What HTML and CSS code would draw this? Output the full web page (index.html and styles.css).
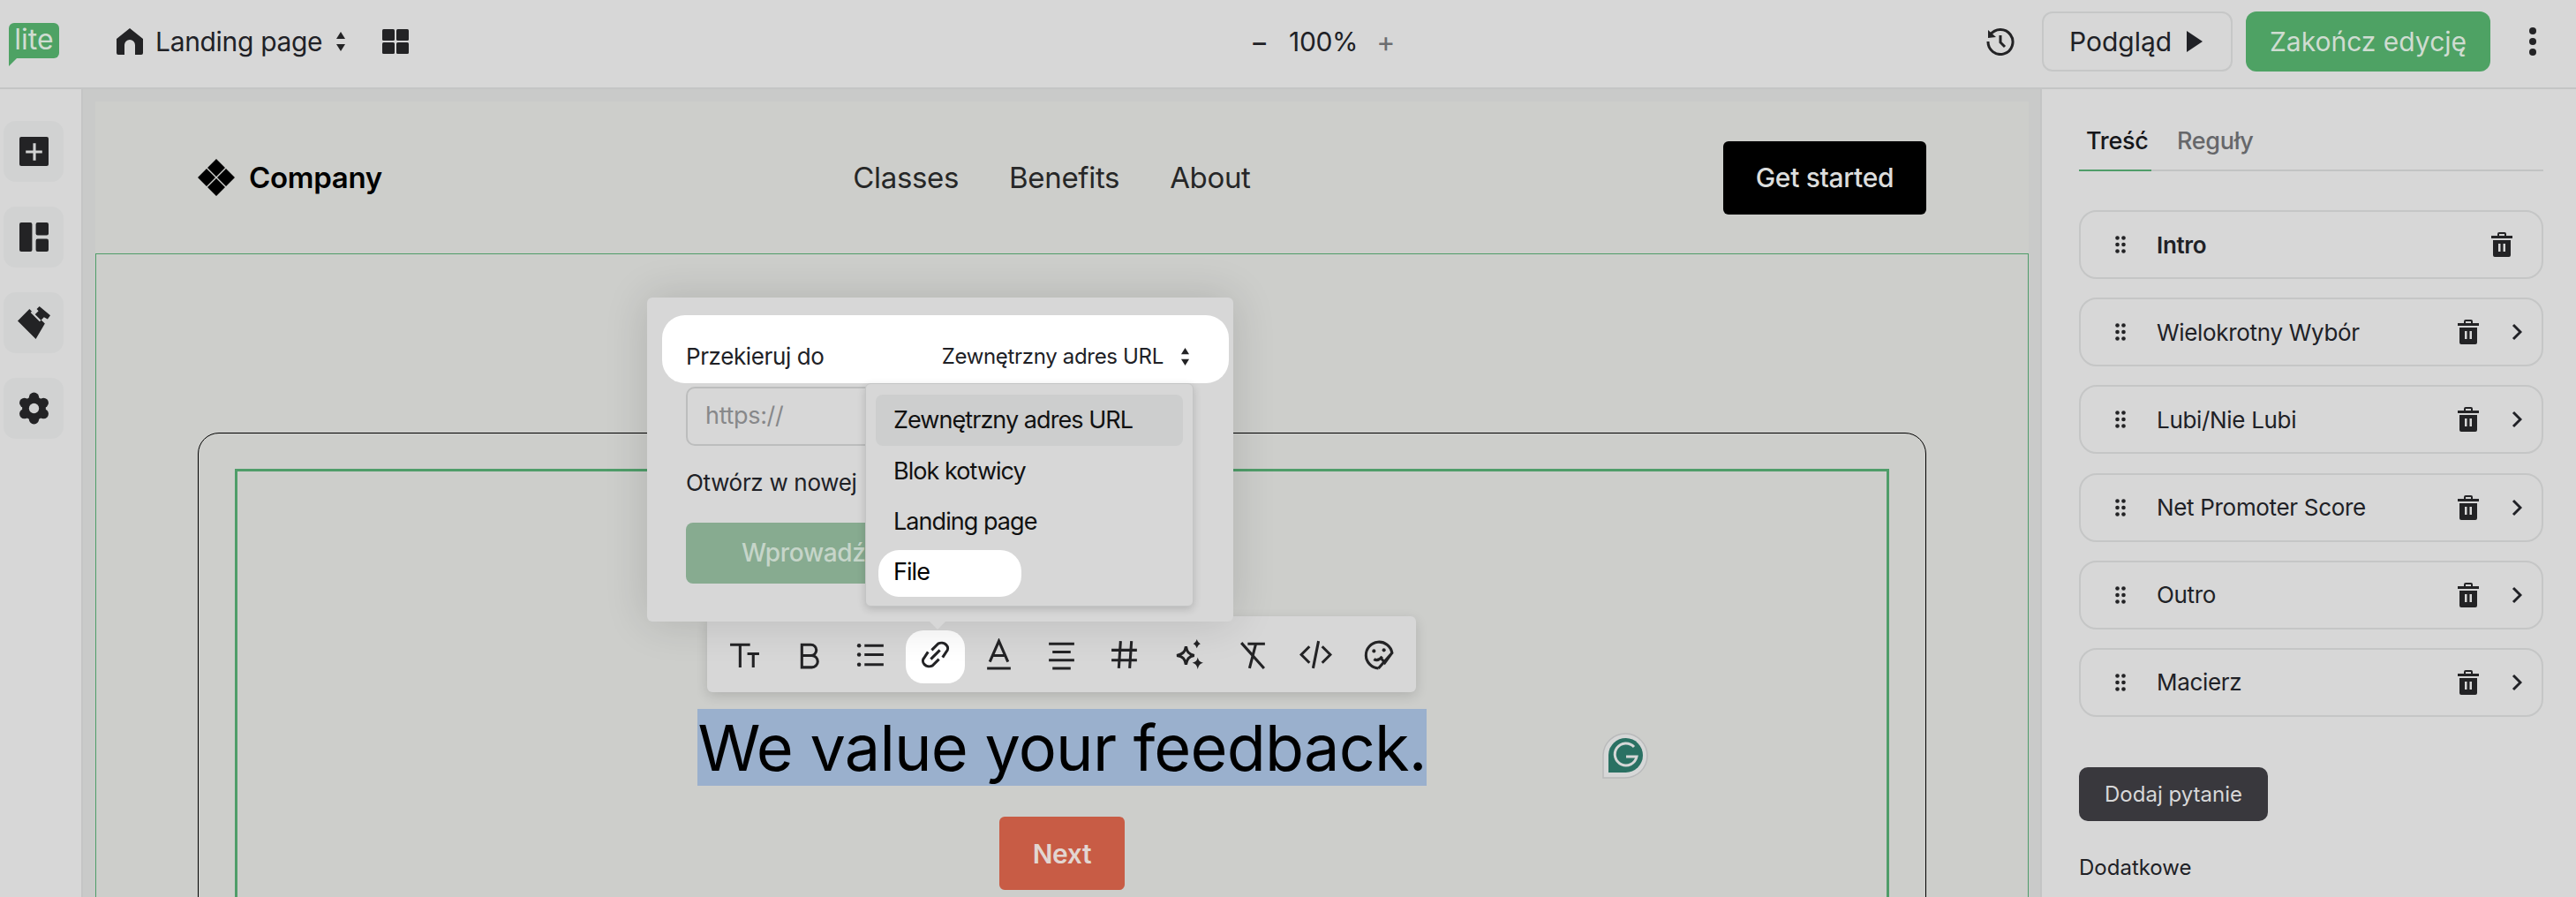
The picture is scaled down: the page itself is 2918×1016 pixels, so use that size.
FILE: index.html
```html
<!DOCTYPE html>
<html lang="pl">
  <head>
    <meta charset="UTF-8" />
    <title>Landing page</title>
    <link rel="stylesheet" href="styles.css">
  </head>
  <body>
    <header class="topbar">
      <div class="topbar-left">
        <div class="logo">lite</div>
        <svg class="home-icon" viewBox="0 0 30 30"><path d="M15 0 30 12V28a2 2 0 0 1-2 2H21V19a6 6 0 0 0-12 0V30H2a2 2 0 0 1-2-2V12Z"/></svg>
        <span class="page-name">Landing page</span>
        <svg class="updown" viewBox="0 0 12 22"><path d="M6 0 11 8H1ZM6 22 1 14H11Z"/></svg>
        <svg class="grid-icon" viewBox="0 0 30 28"><rect width="14" height="13" rx="1.5"/><rect x="16" width="14" height="13" rx="1.5"/><rect y="15" width="14" height="13" rx="1.5"/><rect x="16" y="15" width="14" height="13" rx="1.5"/></svg>
      </div>
      <div class="zoom-control">
        <span class="zoom-btn">−</span>
        <span class="zoom-value">100%</span>
        <span class="zoom-btn zoom-plus">+</span>
      </div>
      <div class="topbar-right">
        <svg class="history-icon" viewBox="0 0 32 32"><path d="M4.5 8.5A14 14 0 1 1 2 16" /><path d="M16 9V17L21 22"/><path class="solid" d="M2 3 11 11 2 12Z"/></svg>
        <button class="btn-preview">Podgląd <svg viewBox="0 0 18 24"><path d="M0 0 18 12 0 24Z"/></svg></button>
        <button class="btn-finish">Zakończ edycję</button>
        <div class="more"><i></i><i></i><i></i></div>
      </div>
    </header>

    <div class="workspace">
      <nav class="sidebar">
        <a class="side-btn">
          <svg viewBox="0 0 32 32"><rect width="32" height="32" rx="2" fill="#232325"/><path d="M15 7h3v8h7v3h-7v8h-3v-8H7v-3h8Z" fill="#d1d2d2"/></svg>
        </a>
        <a class="side-btn">
          <svg viewBox="0 0 32 32"><rect width="14" height="32" rx="2"/><rect x="18" width="14" height="14" rx="2"/><rect x="18" y="18" width="14" height="14" rx="2"/></svg>
        </a>
        <a class="side-btn">
          <svg viewBox="0 0 36 36"><path d="M0 16 13 3 19 9 23 5 21 3 24 0 36 10 33 14 29 12 26 15 30 19 20 36Z"/><path d="M15 6 25 16" stroke="#d1d2d2" stroke-width="2"/></svg>
        </a>
        <a class="side-btn">
          <svg viewBox="0 0 36 36"><circle cx="18" cy="18" r="13"/><circle cx="18" cy="6" r="5.5"/><circle cx="18" cy="30" r="5.5"/><circle cx="7.5" cy="12" r="5.5"/><circle cx="28.500" cy="12" r="5.5"/><circle cx="7.5" cy="24" r="5.500"/><circle cx="28.5" cy="24" r="5.5"/><circle cx="18" cy="18" r="5.500" fill="#d1d2d2"/></svg>
        </a>
      </nav>

      <main class="canvas">
        <div class="page">
          <div class="site-nav">
            <div class="brand">
              <svg viewBox="0 0 42 42"><path d="M21 0 31 10 21 20 11 10ZM10 11 20 21 10 31 0 21ZM32 11 42 21 32 31 22 21ZM21 22 31 32 21 42 11 32Z"/></svg>
              Company
            </div>
            <div class="nav-links">
              <span>Classes</span>
              <span>Benefits</span>
              <span>About</span>
            </div>
            <a class="get-started">Get started</a>
          </div>

          <section class="section">
            <div class="frame">
              <div class="block">
                <h1><span class="selected">We value your feedback.</span></h1>
                <a class="next-btn">Next</a>
              </div>
            </div>
          </section>

          <div class="toolbar">
            <span class="tool"><svg viewBox="0 0 36 36"><path d="M2 7H24M13 7V32M21 17H34M27.500 17V32"/></svg></span>
            <span class="tool"><svg viewBox="0 0 36 36"><path d="M11 7H21a6 6 0 0 1 0 12H11H22a6.500 6.500 0 0 1 0 13H11Z"/></svg></span>
            <span class="tool"><svg viewBox="0 0 36 36"><path d="M10 8H31M10 18H31M10 29H31"/><circle class="solid" cx="4" cy="8" r="2.200"/><circle class="solid" cx="4" cy="18" r="2.200"/><circle class="solid" cx="4" cy="29" r="2.200"/></svg></span>
            <span class="tool tool-active"><svg viewBox="0 0 36 36"><path d="M14 13 21 6a7 6 0 0 1 9 9L26 21M22 23 15 30a7 6 0 0 1-9-9L10 15M13 23 23 13"/></svg></span>
            <span class="tool"><svg viewBox="0 0 36 36"><path d="M8 26 18 3 28 26M11 19H25M5 33H31"/></svg></span>
            <span class="tool"><svg viewBox="0 0 36 36"><path d="M4 6H32M8 15H28M4 24H32M8 33H28"/></svg></span>
            <span class="tool"><svg viewBox="0 0 36 36"><path d="M3 13H31M3 24H31M13 3 11 33M25 3 23 33"/></svg></span>
            <span class="tool"><svg viewBox="0 0 36 36"><path d="M15 9C16 15 18 17 24 19 18 20 16 23 15 29 14 23 12 20 5 19 12 17 14 15 15 9Z"/><path class="solid" d="M27 1C28 4 29 5 31 6 29 7 28 8 27 11 26 8 25 7 23 6 25 5 26 4 27 1ZM28 21C29 25 30 26 34 27 30 28 29 30 28 34 27 30 26 28 22 27 26 26 27 25 28 21Z"/></svg></span>
            <span class="tool"><svg viewBox="0 0 36 36"><path d="M13 6H32M22 6 15 33M6 5 31 33"/></svg></span>
            <span class="tool"><svg viewBox="0 0 36 36"><path d="M11 9 2 18 11 27M25 9 34 18 25 27M21 3 15 33"/></svg></span>
            <span class="tool"><svg viewBox="0 0 36 36"><path d="M17 33A14.500 14.500 0 1 1 32 16L17 33M20 22 24 27 32 16M12 23C15 25 18 24 21 20"/><circle class="solid" cx="12" cy="14" r="2"/><circle class="solid" cx="23" cy="13" r="2"/></svg></span>
          </div>

          <div class="popover">
            <div class="popover-row">
              <span>Przekieruj do</span>
              <span class="select-value">Zewnętrzny adres URL <svg class="updown" viewBox="0 0 12 22"><path d="M6 0 11 8H1ZM6 22 1 14H11Z"/></svg></span>
            </div>
            <div class="url-input">https://</div>
            <div class="new-tab">Otwórz w nowej</div>
            <div class="apply-btn">Wprowadź</div>
            <ul class="dropdown">
              <li class="option option-current">Zewnętrzny adres URL</li>
              <li class="option">Blok kotwicy</li>
              <li class="option">Landing page</li>
              <li class="option option-file">File</li>
            </ul>
          </div>

          <svg class="grammarly" viewBox="0 0 52 53">
            <path d="M1 52V26a25 25 0 1 1 25 26Z" fill="#d6d7d7" stroke="#b9babb" stroke-width="1.500"/>
            <path d="M7 46V26a19.500 19.500 0 1 1 19.500 20Z" fill="#2a7163"/>
            <path d="M36 17A12.500 12.500 0 1 0 39 28H27" fill="none" stroke="#d6d7d7" stroke-width="3"/>
          </svg>
        </div>
      </main>

      <aside class="panel">
        <div class="tabs">
          <span class="tab tab-active">Treść</span>
          <span class="tab">Reguły</span>
        </div>
        <div class="question-list">
          <div class="question question-first">
            <svg class="drag" viewBox="0 0 12 20"><use href="#dots"/></svg>
            <span class="question-name">Intro</span>
            <svg class="trash" viewBox="0 0 24 28"><use href="#bin"/></svg>
          </div>
          <div class="question">
            <svg class="drag" viewBox="0 0 12 20"><use href="#dots"/></svg>
            <span class="question-name">Wielokrotny Wybór</span>
            <svg class="trash" viewBox="0 0 24 28"><use href="#bin"/></svg>
            <svg class="chevron" viewBox="0 0 12 20"><path d="M2 2 10 10 2 18"/></svg>
          </div>
          <div class="question">
            <svg class="drag" viewBox="0 0 12 20"><use href="#dots"/></svg>
            <span class="question-name">Lubi/Nie Lubi</span>
            <svg class="trash" viewBox="0 0 24 28"><use href="#bin"/></svg>
            <svg class="chevron" viewBox="0 0 12 20"><path d="M2 2 10 10 2 18"/></svg>
          </div>
          <div class="question">
            <svg class="drag" viewBox="0 0 12 20"><use href="#dots"/></svg>
            <span class="question-name">Net Promoter Score</span>
            <svg class="trash" viewBox="0 0 24 28"><use href="#bin"/></svg>
            <svg class="chevron" viewBox="0 0 12 20"><path d="M2 2 10 10 2 18"/></svg>
          </div>
          <div class="question">
            <svg class="drag" viewBox="0 0 12 20"><use href="#dots"/></svg>
            <span class="question-name">Outro</span>
            <svg class="trash" viewBox="0 0 24 28"><use href="#bin"/></svg>
            <svg class="chevron" viewBox="0 0 12 20"><path d="M2 2 10 10 2 18"/></svg>
          </div>
          <div class="question">
            <svg class="drag" viewBox="0 0 12 20"><use href="#dots"/></svg>
            <span class="question-name">Macierz</span>
            <svg class="trash" viewBox="0 0 24 28"><use href="#bin"/></svg>
            <svg class="chevron" viewBox="0 0 12 20"><path d="M2 2 10 10 2 18"/></svg>
          </div>
        </div>
        <button class="add-question">Dodaj pytanie</button>
        <div class="extra-title">Dodatkowe</div>
      </aside>
    </div>

    <svg class="defs" width="0" height="0">
      <symbol id="dots" viewBox="0 0 12 20">
        <circle cx="2.500" cy="2.500" r="2.300"/><circle cx="9.500" cy="2.500" r="2.300"/>
        <circle cx="2.500" cy="10" r="2.300"/><circle cx="9.500" cy="10" r="2.300"/>
        <circle cx="2.500" cy="17.500" r="2.300"/><circle cx="9.500" cy="17.500" r="2.300"/>
      </symbol>
      <symbol id="bin" viewBox="0 0 24 28">
        <path fill-rule="evenodd" d="M7 4V2a2 2 0 0 1 2-2h6a2 2 0 0 1 2 2V4h7V7H0V4ZM9 2V4h6V2ZM2 9H22V26a2 2 0 0 1-2 2H4a2 2 0 0 1-2-2ZM8 13V22h2.500V13ZM13.500 13V22H16V13Z"/>
      </symbol>
    </svg>
  </body>
</html>
```

FILE: styles.css
```css
* {
  box-sizing: border-box;
}
html, body {
  margin: 0;
  height: 1016px;
  overflow: hidden;
}
body {
  width: 2918px;
  font-family: Inter, 'Liberation Sans', sans-serif;
  letter-spacing: -0.02em;
  color: #202126;
  background: #d7d7d7;
}
.defs {
  position: absolute;
}

/* top bar */
.topbar {
  display: flex;
  align-items: center;
  height: 101px;
  padding-bottom: 5px;
  border-bottom: 2px solid #c4c5c5;
  background: #d7d7d7;
}
.topbar-left {
  display: flex;
  align-items: center;
  padding-left: 10px;
  width: 1416px;
}
.logo {
  width: 57px;
  height: 40px;
  margin-top: -2px;
  background: #4ea264;
  border-radius: 6px 6px 6px 0;
  color: #cfdcd1;
  font-size: 32px;
  line-height: 38px;
  letter-spacing: 0;
  text-align: center;
  position: relative;
}
.logo::after {
  content: '';
  position: absolute;
  left: 0;
  top: 40px;
  border-top: 9px solid #4ea264;
  border-right: 9px solid transparent;
}
.home-icon {
  width: 30px;
  height: 30px;
  margin-left: 65px;
  fill: #232325;
}
.page-name {
  margin-left: 14px;
  font-size: 30px;
}
.updown {
  width: 12px;
  height: 22px;
  fill: #232325;
}
.topbar-left .updown {
  margin-left: 15px;
}
.grid-icon {
  width: 30px;
  height: 28px;
  margin-left: 41px;
  fill: #232325;
}
.zoom-control {
  display: flex;
  align-items: center;
  font-size: 30px;
}
.zoom-btn {
  width: 18px;
  text-align: center;
  font-size: 32px;
}
.zoom-plus {
  color: #6c6d70;
}
.zoom-value {
  margin: 0 21px 0 26px;
}
.topbar-right {
  display: flex;
  align-items: center;
  margin-left: auto;
}
.history-icon {
  width: 32px;
  height: 32px;
  margin-right: 2px;
  fill: none;
  stroke: #232325;
  stroke-width: 3;
}
.history-icon .solid {
  fill: #232325;
  stroke: none;
}
.btn-preview, .btn-finish {
  height: 68px;
  border-radius: 12px;
  font: inherit;
  font-size: 30px;
  display: flex;
  align-items: center;
}
.btn-preview {
  width: 216px;
  margin-left: 29px;
  padding-left: 29px;
  background: none;
  color: #202126;
  border: 2px solid #c6c7c7;
}
.btn-preview svg {
  width: 18px;
  height: 24px;
  margin-left: 17px;
  fill: #202126;
}
.btn-finish {
  width: 277px;
  margin-left: 15px;
  justify-content: center;
  background: #4ea264;
  color: #cfdcd1;
  border: 0;
}
.more {
  margin-left: 44px;
  margin-right: 45px;
  display: flex;
  flex-direction: column;
  gap: 4px;
}
.more i {
  width: 8px;
  height: 8px;
  border-radius: 50%;
  background: #232325;
}

/* layout under the bar */
.workspace {
  display: flex;
  height: 915px;
}
.sidebar {
  width: 94px;
  flex: none;
  padding: 36px 0 0 4px;
  border-right: 2px solid #c4c5c5;
  display: flex;
  flex-direction: column;
  gap: 28px;
}
.side-btn {
  width: 68px;
  height: 69px;
  border-radius: 14px;
  background: #d1d2d2;
  display: flex;
  align-items: center;
  justify-content: center;
}
.side-btn svg {
  width: 33px;
  height: 33px;
  fill: #232325;
}
.side-btn:nth-child(3) svg, .side-btn:nth-child(4) svg {
  width: 37px;
  height: 37px;
}
.canvas {
  width: 2217px;
  flex: none;
  padding: 14px 0 0 14px;
  background: #c9cac9;
  overflow: hidden;
}
.page {
  width: 2190px;
  height: 901px;
  background: #cdcecb;
  position: relative;
}
.site-nav {
  height: 172px;
  padding: 0 116px;
  display: flex;
  align-items: center;
  justify-content: space-between;
}
.brand {
  display: flex;
  align-items: center;
  gap: 16px;
  font-size: 33px;
  font-weight: 600;
  color: #000;
}
.brand svg {
  width: 42px;
  height: 42px;
  fill: #000;
}
.nav-links {
  display: flex;
  gap: 57px;
  font-size: 33px;
  letter-spacing: -0.01em;
  margin-left: -2px;
  color: #262727;
}
.get-started {
  width: 230px;
  height: 83px;
  border-radius: 6px;
  background: #000;
  color: #dcdddc;
  font-size: 30px;
  font-weight: 500;
  display: flex;
  align-items: center;
  justify-content: center;
}
.section {
  height: 729px;
  padding: 202px 115px 0;
  border-top: 1px solid #4f9d69;
  border-left: 1px solid #4f9d69;
  border-right: 1px solid #4f9d69;
}
.frame {
  height: 700px;
  padding: 40px 41px 0;
  border: 1.5px solid #000;
  border-radius: 24px;
}
.block {
  height: 660px;
  padding-top: 269px;
  border: 3px solid #4f9d69;
  text-align: center;
}
h1 {
  margin: 0;
  height: 87px;
  font-size: 72px;
  line-height: 87px;
  font-weight: 400;
  letter-spacing: -0.8px;
  color: #000;
}
.selected {
  background: #9ab0cd;
}
.next-btn {
  display: flex;
  align-items: center;
  justify-content: center;
  width: 142px;
  height: 83px;
  margin: 35px auto 0;
  border-radius: 6px;
  background: #c85c45;
  color: #e2d6d1;
  font-size: 30px;
  font-weight: 600;
}

/* floating editor controls */
.toolbar {
  position: absolute;
  left: 693px;
  top: 583px;
  width: 803px;
  height: 86px;
  padding: 16px 8px 10px 9px;
  display: flex;
  gap: 5px;
  background: #d7d7d7;
  border-radius: 6px;
  box-shadow: 0 4px 14px rgba(0, 0, 0, 0.14);
}
.tool {
  width: 67px;
  height: 60px;
  border-radius: 20px;
  display: flex;
  align-items: center;
  justify-content: center;
}
.tool svg {
  width: 37px;
  height: 37px;
  margin-top: -5px;
  fill: none;
  stroke: #232325;
  stroke-width: 3;
}
.tool svg .solid {
  fill: #232325;
  stroke: none;
}
.tool-active {
  background: #fff;
}
.popover {
  position: absolute;
  left: 625px;
  top: 222px;
  width: 664px;
  height: 367px;
  padding: 20px 5px 0 17px;
  background: #d7d7d7;
  border-radius: 6px;
  box-shadow: 0 0 50px rgba(0, 0, 0, 0.14);
  font-size: 26px;
}
.popover::after {
  content: '';
  position: absolute;
  left: 320px;
  top: 367px;
  border-top: 9px solid #d7d7d7;
  border-left: 9px solid transparent;
  border-right: 9px solid transparent;
}
.popover-row {
  height: 77px;
  padding: 16px 44px 0 27px;
  display: flex;
  align-items: center;
  justify-content: space-between;
  background: #fff;
  border-radius: 26px;
}
.popover-row > span:first-child {
  letter-spacing: -0.015em;
}
.select-value {
  display: flex;
  align-items: center;
  gap: 19px;
  font-size: 24px;
}
.select-value .updown {
  width: 11px;
  height: 20px;
}
.url-input {
  width: 575px;
  height: 67px;
  margin: 4px 0 0 27px;
  padding-left: 20px;
  border: 2px solid #bcbdbd;
  border-radius: 10px;
  color: #87888a;
  line-height: 62px;
  font-size: 27px;
}
.new-tab {
  margin: 25px 0 0 27px;
  line-height: 34px;
  white-space: nowrap;
}
.apply-btn {
  width: 575px;
  height: 69px;
  margin: 28px 0 0 27px;
  padding-left: 63px;
  border-radius: 8px;
  background: #87ab90;
  color: #c6d5c9;
  font-size: 28px;
  font-weight: 500;
  line-height: 69px;
}
.dropdown {
  position: absolute;
  left: 247px;
  top: 97px;
  width: 372px;
  height: 253px;
  margin: 0;
  padding: 12px 11px;
  list-style: none;
  background: #d7d7d7;
  border: 1px solid #c4c5c5;
  border-radius: 6px;
  box-shadow: 0 3px 10px rgba(0, 0, 0, 0.16);
  color: #111;
  font-size: 27px;
  letter-spacing: -0.035em;
}
.option {
  height: 57.5px;
  padding-left: 20px;
  line-height: 57px;
  border-radius: 8px;
}
.option-current {
  background: #cdcece;
}
.option-file {
  width: 162px;
  height: 53px;
  margin: 3px 0 0 3px;
  padding-left: 17px;
  line-height: 50px;
  background: #fff;
  border-radius: 24px;
  color: #000;
}
.grammarly {
  position: absolute;
  left: 1707px;
  top: 714px;
  width: 52px;
  height: 53px;
}

/* right panel */
.panel {
  flex: 1;
  padding: 0 37px 0 42px;
  background: #d7d7d7;
  border-left: 2px solid #c4c5c5;
}
.tabs {
  height: 93px;
  padding-top: 41px;
  display: flex;
  border-bottom: 2px solid #c2c3c3;
  font-size: 27px;
  line-height: 36px;
}
.tab {
  padding: 0 8px;
  color: #66676a;
  font-weight: 500;
}
.tab-active {
  height: 52px;
  color: #15161a;
  border-bottom: 2px solid #4f9d69;
  width: 82px;
  margin-right: 21px;
}
.question-list {
  margin-top: 44px;
  display: flex;
  flex-direction: column;
  gap: 21.2px;
}
.question {
  height: 78px;
  padding: 0 22px 0 39px;
  display: flex;
  align-items: center;
  border: 2px solid #c5c6c6;
  border-radius: 20px;
  font-size: 26px;
}
.drag {
  width: 12px;
  height: 20px;
  fill: #232325;
}
.question-name {
  margin-left: 35px;
  flex: 1;
}
.question-first .question-name {
  font-weight: 600;
}
.trash {
  width: 24px;
  height: 28px;
  fill: #232325;
}
.question-first .trash {
  margin-right: 11px;
}
.chevron {
  width: 12px;
  height: 20px;
  margin-left: 37px;
  fill: none;
  stroke: #202126;
  stroke-width: 3;
}
.add-question {
  display: block;
  width: 214px;
  height: 61px;
  margin-top: 57px;
  background: #39383d;
  color: #d7d7d8;
  border: 0;
  border-radius: 10px;
  font: inherit;
  font-size: 24px;
  letter-spacing: 0;
}
.extra-title {
  margin-top: 38px;
  font-size: 24px;
  letter-spacing: 0;
}
```
